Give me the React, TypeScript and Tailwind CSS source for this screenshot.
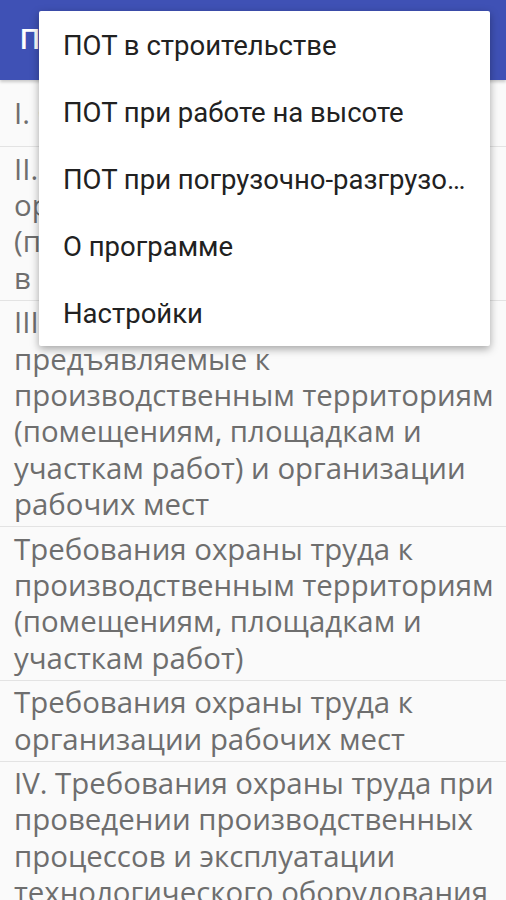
const items = [
  "I. Общие положения",
  "II. Требования охраны труда при организации проведения работ (производственных процессов) в\u00a0строительстве",
  "III. Требования охраны труда, предъявляемые к производственным территориям (помещениям, площадкам и участкам работ) и организации рабочих мест",
  "Требования охраны труда к производственным территориям (помещениям, площадкам и участкам работ)",
  "Требования охраны труда к организации рабочих мест",
  "IV. Требования охраны труда при проведении производственных процессов и эксплуатации технологического оборудования",
];

const menu = [
  "ПОТ в строительстве",
  "ПОТ при работе на высоте",
  "ПОТ при погрузочно-разгрузочных работах",
  "О программе",
  "Настройки",
];

export default function App() {
  return (
    <div
      className="relative w-[506px] h-[900px] overflow-hidden bg-[#fafafa]"
      style={{ fontFamily: "Roboto, 'Noto Sans', sans-serif" }}
    >
      <header className="h-[80px] bg-[#3f51b5] flex items-center pl-[20px] shadow-[0_2px_3px_rgba(0,0,0,0.2)] relative z-10">
        <span className="text-white text-[28px] font-medium">ПОТ в строительстве</span>
      </header>

      <ul style={{ fontFamily: "'Open Sans', 'Noto Sans', sans-serif" }}>
        {items.map((t, i) => (
          <li
            key={i}
            className="min-h-[67px] flex items-center border-b border-[#e3e3e3] pl-[14px] pr-[6px] py-[3.5px] text-[29.4px] leading-[36.4px] text-[#6e6e6e]"
          >
            {t}
          </li>
        ))}
      </ul>

      <div className="absolute left-[39px] top-[11px] w-[451px] bg-white rounded-[2px] shadow-[0_3px_8px_rgba(0,0,0,0.35)] z-20">
        {menu.map((m) => (
          <div
            key={m}
            className="h-[67px] flex items-center pl-[24px] pr-[24px] pt-[3px] text-[27.5px] text-[#212121]"
          >
            <span className="truncate">{m}</span>
          </div>
        ))}
      </div>
    </div>
  );
}
